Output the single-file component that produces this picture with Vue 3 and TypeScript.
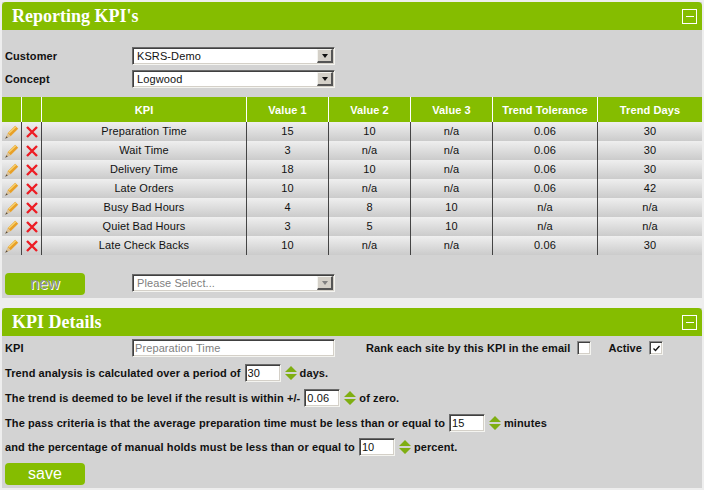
<script setup lang="ts">
interface Row { kpi: string; v1: string; v2: string; v3: string; tol: string; days: string }
const rows: Row[] = [
  { kpi: 'Preparation Time', v1: '15', v2: '10', v3: 'n/a', tol: '0.06', days: '30' },
  { kpi: 'Wait Time', v1: '3', v2: 'n/a', v3: 'n/a', tol: '0.06', days: '30' },
  { kpi: 'Delivery Time', v1: '18', v2: '10', v3: 'n/a', tol: '0.06', days: '30' },
  { kpi: 'Late Orders', v1: '10', v2: 'n/a', v3: 'n/a', tol: '0.06', days: '42' },
  { kpi: 'Busy Bad Hours', v1: '4', v2: '8', v3: '10', tol: 'n/a', days: 'n/a' },
  { kpi: 'Quiet Bad Hours', v1: '3', v2: '5', v3: '10', tol: 'n/a', days: 'n/a' },
  { kpi: 'Late Check Backs', v1: '10', v2: 'n/a', v3: 'n/a', tol: '0.06', days: '30' },
]
</script>

<template>
  <div class="page">
    <section class="panel top">
      <header class="head">
        <h1>Reporting KPI's</h1>
        <span class="toggle"><i></i></span>
      </header>
      <div class="filters">
        <div class="frow">
          <label>Customer</label>
          <div class="sel"><span>KSRS-Demo</span><b class="arrow"><i></i></b></div>
        </div>
        <div class="frow">
          <label>Concept</label>
          <div class="sel"><span>Logwood</span><b class="arrow"><i></i></b></div>
        </div>
      </div>
      <table class="grid">
        <colgroup>
          <col class="c1" /><col class="c2" /><col class="c3" /><col class="c4" /><col class="c4" /><col class="c4" /><col class="c5" /><col />
        </colgroup>
        <thead>
          <tr>
            <th></th><th></th><th>KPI</th><th>Value 1</th><th>Value 2</th><th>Value 3</th><th>Trend Tolerance</th><th>Trend Days</th>
          </tr>
        </thead>
        <tbody>
          <tr v-for="r in rows" :key="r.kpi">
            <td class="ic">
              <svg width="16" height="16" viewBox="0 0 16 16" class="svg">
                <path d="M3.6 9.2 L11.2 1.8 L14.2 4.8 L6.6 12.2 Z" fill="#e8a028" />
                <path d="M4.8 9.4 L11.8 2.8" stroke="#f9d774" stroke-width="1.2" fill="none" />
                <path d="M3.6 9.2 L6.6 12.2 L1.2 14.8 Z" fill="#dcc092" />
                <path d="M2.4 12.2 L3.8 13.5 L1.2 14.8 Z" fill="#54493e" />
              </svg>
            </td>
            <td class="ic">
              <svg width="14" height="14" viewBox="0 0 14 14" class="svg">
                <path d="M2 2 L12 12 M12 2 L2 12" stroke="#ed1c24" stroke-width="2.4" fill="none" />
              </svg>
            </td>
            <td>{{ r.kpi }}</td><td>{{ r.v1 }}</td><td>{{ r.v2 }}</td><td>{{ r.v3 }}</td><td>{{ r.tol }}</td><td>{{ r.days }}</td>
          </tr>
        </tbody>
      </table>
      <div class="actions">
        <button class="btn off" type="button">new</button>
        <div class="sel dis"><span>Please Select...</span><b class="arrow"><i></i></b></div>
      </div>
    </section>

    <section class="panel bottom">
      <header class="head">
        <h1>KPI Details</h1>
        <span class="toggle"><i></i></span>
      </header>
      <div class="details">
        <div class="drow first">
          <label class="kl">KPI</label>
          <input class="inp wide" placeholder="Preparation Time" />
          <span class="rank">Rank each site by this KPI in the email</span>
          <span class="chk"></span>
          <span class="act">Active</span>
          <span class="chk on">
            <svg width="9" height="9" viewBox="0 0 9 9"><path d="M1.5 4.5 L3.5 6.5 L7.5 2" stroke="#111" stroke-width="1.3" fill="none" /></svg>
          </span>
        </div>
        <div class="drow r2">
          <span>Trend analysis is calculated over a period of</span>
          <input class="inp num" value="30" />
          <svg class="spin" width="12" height="14" viewBox="0 0 12 14"><path d="M6 0 L12 6 L0 6 Z M0 8 L12 8 L6 14 Z" fill="#7fae12" /></svg>
          <span>days.</span>
        </div>
        <div class="drow r3">
          <span>The trend is deemed to be level if the result is within +/-</span>
          <input class="inp num" value="0.06" />
          <svg class="spin" width="12" height="14" viewBox="0 0 12 14"><path d="M6 0 L12 6 L0 6 Z M0 8 L12 8 L6 14 Z" fill="#7fae12" /></svg>
          <span>of zero.</span>
        </div>
        <div class="drow r4">
          <span>The pass criteria is that the average preparation time must be less than or equal to</span>
          <input class="inp num" value="15" />
          <svg class="spin" width="12" height="14" viewBox="0 0 12 14"><path d="M6 0 L12 6 L0 6 Z M0 8 L12 8 L6 14 Z" fill="#7fae12" /></svg>
          <span>minutes</span>
        </div>
        <div class="drow r5">
          <span>and the percentage of manual holds must be less than or equal to</span>
          <input class="inp num" value="10" />
          <svg class="spin" width="12" height="14" viewBox="0 0 12 14"><path d="M6 0 L12 6 L0 6 Z M0 8 L12 8 L6 14 Z" fill="#7fae12" /></svg>
          <span>percent.</span>
        </div>
        <button class="btn" type="button">save</button>
      </div>
    </section>
  </div>
</template>

<style>
html, body { margin: 0; background: #eeeeee; }
</style>

<style scoped>
.page {
  width: 704px;
  height: 490px;
  box-sizing: border-box;
  padding: 2px;
  background: #eeeeee;
  font-family: "Liberation Sans", Arial, sans-serif;
  font-size: 11px;
  color: #111;
  display: flex;
  flex-direction: column;
  gap: 10px;
  overflow: hidden;
}
.panel { background: #d3d3d3; width: 700px; }
.top { height: 296px; }
.bottom { height: 180px; }
.head {
  height: 28px;
  background: #85bd00;
  border-radius: 4px 4px 0 0;
  display: flex;
  align-items: center;
  justify-content: space-between;
  padding: 0 5px 0 10px;
}
.head h1 {
  margin: 0;
  font: bold 18px "Liberation Serif", "Times New Roman", serif;
  color: #fff;
}
.toggle {
  width: 15px;
  height: 15px;
  box-sizing: border-box;
  border: 1px solid #fff;
  display: flex;
  align-items: center;
  justify-content: center;
}
.toggle i { width: 8px; height: 1px; background: #fff; }
.filters {
  padding: 17px 0 0 3px;
  display: flex;
  flex-direction: column;
  gap: 5px;
}
.frow { display: flex; align-items: center; }
.frow label { width: 127px; font-weight: bold; letter-spacing: 0.1px; }
.sel {
  width: 203px;
  height: 18px;
  box-sizing: border-box;
  border: 1px solid;
  border-color: #6a6a6a #f4f4f0 #f4f4f0 #6a6a6a;
  box-shadow: inset 1px 1px 0 #404040, inset -1px -1px 0 #d4d0c8;
  background: #fff;
  display: flex;
  align-items: center;
  justify-content: space-between;
  padding: 1px 1px 1px 4px;
  letter-spacing: 0.1px;
}
.arrow {
  width: 16px;
  height: 14px;
  box-sizing: border-box;
  background: #d4d0c8;
  border-style: solid;
  border-width: 1px 2px 2px 1px;
  border-color: #f4f4f0 #555 #555 #f4f4f0;
  display: flex;
  align-items: center;
  justify-content: center;
}
.arrow i {
  width: 0;
  height: 0;
  border: 3.5px solid transparent;
  border-top: 4px solid #111;
  border-bottom: 0;
}
.grid {
  margin-top: 9px;
  width: 700px;
  table-layout: fixed;
  border-collapse: separate;
  border-spacing: 0;
  letter-spacing: 0.1px;
}
.c1 { width: 20px; }
.c2 { width: 20px; }
.c3 { width: 205px; }
.c4 { width: 82px; }
.c5 { width: 105px; }
.grid th {
  height: 25px;
  padding: 0;
  background: #85bd00;
  color: #fff;
  font-weight: bold;
  text-align: center;
  border-right: 1px solid #fff;
}
.grid th:last-child, .grid td:last-child { border-right: 0; }
.grid td {
  height: 19px;
  box-sizing: border-box;
  padding: 0 0 2px;
  text-align: center;
  background: linear-gradient(#efefef, #cbcbcb);
  border-right: 1px solid #444;
}
.grid td.ic { padding: 0; line-height: 0; }
.svg { display: inline-block; vertical-align: middle; }
.actions {
  display: flex;
  align-items: flex-start;
  gap: 47px;
  padding: 18px 0 0 3px;
}
.actions .sel { margin-top: 1px; }
.btn {
  width: 80px;
  height: 22px;
  padding: 0;
  border: 0;
  border-radius: 4px;
  background: #85bd00;
  color: #fff;
  font: 16px "Liberation Sans", Arial, sans-serif;
  display: block;
}
.btn.off { color: #8f8f8f; text-shadow: 1px 1px 0 #fff; }
.dis { color: #808080; }
.dis .arrow i { border-top-color: #808080; }
.details {
  padding: 3px 0 0 3px;
  display: flex;
  flex-direction: column;
}
.drow { display: flex; align-items: center; font-weight: bold; letter-spacing: 0.1px; white-space: nowrap; }
.drow.first { height: 18px; }
.kl { width: 127px; }
.inp {
  box-sizing: border-box;
  height: 18px;
  border: 1px solid;
  border-color: #6a6a6a #f4f4f0 #f4f4f0 #6a6a6a;
  box-shadow: inset 1px 1px 0 #404040, inset -1px -1px 0 #d4d0c8;
  background: #fff;
  padding: 0 2px;
  margin: 0;
  font: 11px "Liberation Sans", Arial, sans-serif;
  color: #111;
  letter-spacing: 0.1px;
  outline: none;
}
.inp::placeholder { color: #808080; opacity: 1; }
.wide { width: 203px; margin-right: 31px; }
.num { width: 36px; margin: 0 4px; }
.spin { margin-right: 3px; flex: none; }
.rank { margin-right: 7px; }
.chk {
  width: 14px;
  height: 14px;
  box-sizing: border-box;
  border: 1px solid;
  border-color: #8a8a8a #f4f4f0 #f4f4f0 #8a8a8a;
  box-shadow: inset 1px 1px 0 #404040, inset -1px -1px 0 #d4d0c8;
  background: #fff;
  display: flex;
  align-items: center;
  justify-content: center;
}
.act { margin: 0 7px 0 17px; }
.r2, .r3, .r4 { margin-top: 7px; }
.r5 { margin-top: 6px; }
.bottom .btn { margin-top: 7px; }
</style>
